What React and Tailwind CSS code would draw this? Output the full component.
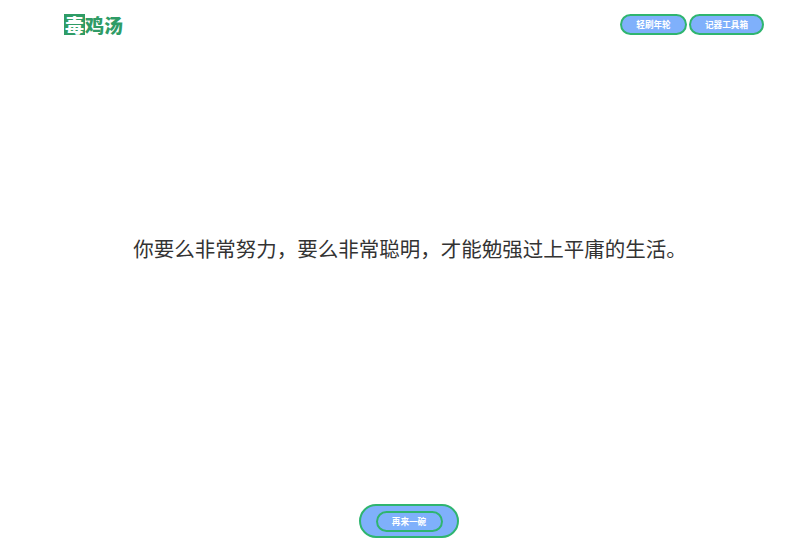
const cn = { fontFamily: '"Noto Sans CJK SC", sans-serif' }

const PillLink = ({ className, children }) => (
  <a className={`flex h-[21px] items-center justify-center rounded-full border-2 border-[#2fb56f] bg-[#7fb0fb] text-[8.6px] font-bold text-white ${className}`}>
    {children}
  </a>
)

export default function App() {
  return (
    <div className="flex h-[558px] w-full flex-col bg-white" style={cn}>
      <header className="flex items-start justify-between pl-[64px] pr-[36px] pt-[14px]">
        <div className="flex items-center font-black leading-none text-[#2f9c66]">
          <span className="flex h-[21px] w-[21px] items-center justify-center bg-[#2f9c66] text-[19px] text-white">毒</span>
          <span className="text-[19px]">鸡汤</span>
        </div>
        <nav className="flex gap-[2px]">
          <PillLink className="w-[67px]">轻刷年轮</PillLink>
          <PillLink className="w-[75px]">记器工具箱</PillLink>
        </nav>
      </header>
      <main className="flex flex-1 items-center justify-center pb-[43px] pl-[20px]">
        <p className="text-[20.5px] leading-[30px] text-[#333333]">你要么非常努力，要么非常聪明，才能勉强过上平庸的生活。</p>
      </main>
      <footer className="flex justify-center pb-[20px] pl-[18px]">
        <div className="flex h-[34px] w-[100px] items-center justify-center rounded-full border-2 border-[#2fb56f] bg-[#7fb0fb]">
          <button className="flex h-[21px] w-[67px] items-center justify-center rounded-full border-2 border-[#2fb56f] text-[8.6px] font-bold text-white">再来一碗</button>
        </div>
      </footer>
    </div>
  )
}
